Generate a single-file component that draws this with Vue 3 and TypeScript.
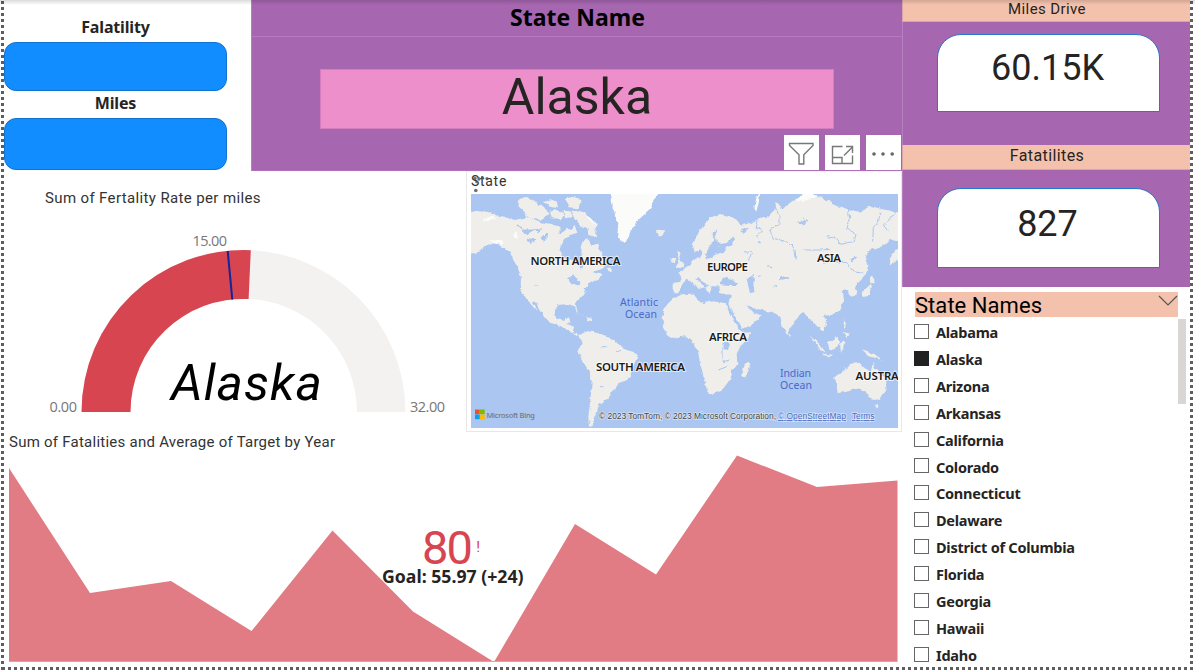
<script setup lang="ts">
interface MapLabel {
  text: string
  x: number
  y: number
  width: number
}

const states: string[] = [
  'Alabama', 'Alaska', 'Arizona', 'Arkansas', 'California', 'Colorado', 'Connecticut',
  'Delaware', 'District of Columbia', 'Florida', 'Georgia', 'Hawaii', 'Idaho',
]
const selected = 'Alaska'

const continents: MapLabel[] = [
  { text: 'NORTH AMERICA', x: 59.5, y: 71.3, width: 90 },
  { text: 'EUROPE', x: 236, y: 76.8, width: 41 },
  { text: 'ASIA', x: 346, y: 67.8, width: 24 },
  { text: 'AFRICA', x: 238, y: 147.3, width: 38 },
  { text: 'SOUTH AMERICA', x: 125, y: 176.8, width: 89 },
  { text: 'AUSTRALIA', x: 384.5, y: 185.8, width: 61 },
]
const oceans: MapLabel[] = [
  { text: 'Atlantic', x: 149, y: 111.5, width: 38 },
  { text: 'Ocean', x: 154, y: 123.7, width: 32 },
  { text: 'Indian', x: 309, y: 182.7, width: 31 },
  { text: 'Ocean', x: 309, y: 194.9, width: 32 },
]

const trend: [number, number][] = [
  [9, 36], [90, 161], [171, 149], [251.5, 199], [332.5, 98.5], [413, 179.5], [494, 230],
  [575, 92], [656, 142.5], [737, 23.5], [817, 55], [897.5, 48.5],
]
const area = `9,229.5 ${trend.map((p) => p.join(',')).join(' ')} 897.5,229.5`
</script>

<template>
  <div class="report">
    <main class="canvas">
      <section class="top">
        <nav class="nav">
          <div class="nav-label">Falatility</div>
          <button class="pill first" aria-label="Falatility"></button>
          <div class="nav-label second">Miles</div>
          <button class="pill last" aria-label="Miles"></button>
        </nav>
        <header class="banner">
          <div class="banner-title"><span>State Name</span></div>
          <div class="state-card"><span>Alaska</span></div>
          <div class="tools">
            <button class="tool" aria-label="Filters">
              <svg width="35" height="35" viewBox="0 0 35 35">
                <path d="M5.5 8.5H29V10.5L19.8 19.8V29H15V19.8L5.5 10.5Z" />
              </svg>
            </button>
            <button class="tool" aria-label="Focus mode">
              <svg width="35" height="35" viewBox="0 0 35 35">
                <path d="M17.500 11.500H7.500V28.500H27.500V20.500M7.500 22.500H17V28.500M19 20.500L27 12.500M21 11.500H27.500V18" />
              </svg>
            </button>
            <button class="tool" aria-label="More options">
              <svg class="dots" width="35" height="35" viewBox="0 0 35 35">
                <circle cx="8" cy="19" r="1.8" /><circle cx="17" cy="19" r="1.8" /><circle cx="26.200" cy="19" r="1.8" />
              </svg>
            </button>
          </div>
        </header>
      </section>

      <section class="middle">
        <svg class="gauge" width="466" height="261" viewBox="0 171 466 261">
          <text class="din title" x="45" y="203" textLength="215.500">Sum of Fertality Rate per miles</text>
          <path class="track" d="M81.500 412A162 162 0 0 1 405.500 412H357A113 113 0 0 0 130.500 412Z" />
          <path class="value" d="M81.500 412A162 162 0 0 1 250.800 250.200L248.600 299A113 113 0 0 0 130.500 412Z" />
          <path class="target" d="M227.700 251L232.300 299.500" />
          <text class="tick" x="192.500" y="246" textLength="34.500">15.00</text>
          <text class="tick" x="49.500" y="412" textLength="27.500">0.00</text>
          <text class="tick" x="410" y="412" textLength="35">32.00</text>
          <text class="din callout" x="171" y="400" textLength="151">Alaska</text>
        </svg>

        <div class="map-card">
          <div class="map-title">
            <span>State</span>
            <svg class="marks" width="24" height="20" viewBox="0 0 24 20">
              <circle cx="4" cy="4.500" r="1.700" /><circle cx="8" cy="5" r="1.700" /><circle cx="11.500" cy="4" r="1.700" />
              <circle cx="16" cy="4.500" r="1.600" /><circle cx="5.500" cy="8" r="1.300" /><circle cx="4.800" cy="16.500" r="1.800" />
            </svg>
          </div>
          <svg class="map" width="427" height="234" viewBox="0 0 427 234">
            <defs>
              <filter id="coast" x="-5%" y="-5%" width="110%" height="110%">
                <feTurbulence type="fractalNoise" baseFrequency="0.16" numOctaves="3" seed="4" />
                <feDisplacementMap in="SourceGraphic" scale="4.500" xChannelSelector="R" yChannelSelector="G" />
              </filter>
            </defs>
            <rect class="sea" width="427" height="234" />
            <g filter="url(#coast)">
              <g transform="scale(.33333) translate(-33 -72)">
                <path class="land" d="M20 128L60 121 100 130 130 140 165 150 200 142 240 157 275 162 300 172 330 180 345 168 352 188 330 195 318 205 303 222 298 245 308 262 325 268 345 272 355 287 362 302 370 280 362 262 368 250 362 235 368 212 385 208 395 225 410 222 420 240 430 265 437 287 425 297 400 305 412 311 428 313 415 330 395 335 385 345 375 355 372 375 360 385 347 400 353 432 340 407 320 402 295 405 285 420 288 445 310 455 325 438 332 455 322 462 342 470 338 487 358 490 350 497 325 482 300 467 270 458 255 442 240 420 225 395 215 395 235 424 220 412 205 390 190 375 182 350 183 320 172 290 160 270 150 247 125 228 100 220 85 225 70 235 45 250 20 250Z" />
                <path class="land" d="M358 492L385 484 410 488 430 498 460 506 475 525 500 540 530 548 532 565 520 585 510 620 495 632 475 640 465 660 450 672 440 687 415 705 412 727 400 745 398 770 387 768 385 740 390 700 395 650 393 610 375 590 360 560 354 540 368 520 362 505Z" />
                <path class="ice" d="M448 60H605L580 95 570 120 545 140 530 155 515 175 500 215 482 214 472 190 475 160 465 130 455 105Z" />
                <path class="land" d="M587 184L600 176 615 180 612 192 596 199ZM178 88L195 80 225 94 234 104 255 110 265 133 242 150 205 145 190 125 175 112ZM250 100L270 88 290 94 295 115 270 110ZM270 125L290 120 310 130 305 148 275 145ZM318 90L342 82 365 88 355 115 325 112ZM310 120L330 120 338 140 315 145ZM335 125L360 120 375 130 390 148 410 165 405 190 410 202 385 195 382 175 360 165 345 150ZM440 295L455 292 455 307 442 303ZM350 430L375 442 365 438ZM380 442L400 448 393 453 378 450Z" />
                <path class="ice" d="M70 150L90 138 110 145 85 154ZM85 210L130 214 127 225 98 219ZM160 187L170 182 173 205 163 204ZM375 135L395 145 414 166 400 162Z" />
                <path class="lake" d="M320 325L340 318 355 327 345 335 360 338 355 345 332 340ZM220 180L245 175 236 188ZM245 205L260 190 257 212ZM300 160L315 180 300 190ZM170 165L190 180 220 180 200 192ZM200 205L225 210 210 220ZM222 345H235M425 530H440M470 542H484M420 650H430" />
              </g>
              <g transform="scale(.33333) translate(627 -72)">
                <path class="land" d="M-22 338L5 336 3 320 -5 305 15 295 30 284 45 270 60 265 70 242 82 265 105 255 130 245 150 225 165 212 160 198 175 192 200 185 205 165 235 145 265 138 282 125 290 93 300 100 305 120 320 108 345 90 375 78 430 84 460 102 500 120 540 125 570 108 620 120 640 123 665 135V218L645 215 625 210 600 235 575 235 555 255 565 285 560 310 535 335 525 350 530 372 516 380 503 358 485 360 490 395 480 420 455 435 435 437 441 465 430 487 410 468 398 452 385 445 370 425 355 445 330 470 322 495 305 470 298 440 270 425 220 415 200 402 210 420 245 438 215 465 187 477 165 440 148 402 155 375 120 370 118 350 95 348 90 372 75 352 55 323 48 327 80 350 55 357 40 335 15 330 2 352 -2 370 -22 370Z" />
                <path class="land" d="M45 250L38 225 50 200 65 175 90 145 120 132 150 138 175 152 185 167 210 158 200 190 160 200 140 215 118 230 95 222 85 250 70 250 60 238Z" />
                <path class="land" d="M40 371L10 372 -20 385 -40 405 -55 440 -48 470 -40 495 -20 508 15 498 30 508 45 525 55 545 60 580 68 610 75 640 85 668 100 671 125 662 145 635 155 605 172 580 170 555 180 530 205 505 212 487 190 488 180 480 165 455 150 425 140 402 105 398 90 392 70 400 50 385Z" />
                <path class="land" d="M-8 242L5 250 0 268 13 282 10 292 -15 294 -3 275ZM-25 265L-13 262 -15 280 -28 281ZM190 585L205 575 210 590 195 625 184 618ZM629 268L645 240 660 235 658 270 633 283ZM545 370L562 352 575 340 568 374 548 378ZM570 325L580 318 584 340 570 338ZM390 500L410 514 435 548 420 540ZM427 551L460 554 450 559 430 556ZM443 517L470 500 478 520 465 540 448 536ZM480 520L497 513 487 538 483 550ZM545 538L570 545 597 562 603 569 570 560ZM487 445L498 460 494 478ZM488 485L510 492 500 504ZM326 490L334 498 330 503Z" />
                <path class="land" d="M463 622L490 602 510 582 540 578 550 590 572 610 578 575 588 600 615 625 617 660 600 690 572 685 560 672 535 655 500 665 470 670ZM585 704L596 706 592 718Z" />
                <path class="ice" d="M220 110L230 82 242 66 234 104 229 125ZM345 90L365 78 370 65 395 68 410 82 375 92Z" />
                <path class="sea" d="M98 190L112 178 105 205 115 222 150 218 115 230 112 242 75 256 88 230 100 215ZM123 330L140 320 150 328 175 338 170 345 145 345 122 343ZM200 325L222 315 220 345 227 365 210 370ZM45 326L60 330 88 348 75 350ZM182 180L205 172 192 193ZM140 403L188 474 180 478ZM132 520L150 518 144 540 132 538Z" />
                <path class="river" d="M285 115L300 135 300 160 270 180 280 205 320 215 345 240 348 265M505 120L510 150 500 175 525 190 520 215 480 223 470 205 440 200M600 125L595 155 580 175 578 215M650 125L610 165 625 185M430 280L450 274 500 278 520 305 550 310M235 145L228 175 245 182 230 200 240 220M190 245L215 248 205 275M355 160L380 150 370 138M128 520L130 575 150 570M115 600L145 588M370 240H425L450 238" />
                <path class="lake" d="M300 325L320 317 326 321 305 328ZM510 268L530 262 515 275ZM360 160L376 152 374 163ZM231 320L242 317M262 292H274M280 350H290" />
              </g>
            </g>
            <text v-for="c in continents" :key="c.text" class="continent" :x="c.x" :y="c.y" :textLength="c.width">{{ c.text }}</text>
            <text v-for="o in oceans" :key="o.text + o.x" class="ocean" :x="o.x" :y="o.y" :textLength="o.width">{{ o.text }}</text>
            <rect x="4" y="215.500" width="4.700" height="4.700" fill="#f25022" />
            <rect x="9" y="215.500" width="4.700" height="4.700" fill="#7fba00" />
            <rect x="4" y="220.500" width="4.700" height="4.700" fill="#00a4ef" />
            <rect x="9" y="220.500" width="4.700" height="4.700" fill="#ffb900" />
            <text class="bing" x="15.500" y="223.500" textLength="48.500">Microsoft Bing</text>
            <text class="legal" x="128" y="225" textLength="177">© 2023 TomTom, © 2023 Microsoft Corporation,</text>
            <text class="legal link" x="307" y="225" textLength="68">© OpenStreetMap</text>
            <text class="legal link" x="381" y="225" textLength="22.500">Terms</text>
          </svg>
        </div>
      </section>

      <svg class="trend" width="902" height="235" viewBox="0 0 902 235">
        <polygon :points="area" />
        <path class="base" d="M9 229.500H897.500" />
        <text class="din title" x="9" y="15" textLength="326">Sum of Fatalities and Average of Target by Year</text>
        <text class="din kpi" x="422" y="132" textLength="51">80</text>
        <text class="din alert" x="476.300" y="120">!</text>
        <text class="goal" x="382" y="151" textLength="141.500" lengthAdjust="spacingAndGlyphs">Goal: 55.97 (+24)</text>
      </svg>
    </main>

    <aside class="side">
      <div class="metrics">
        <div class="metric-title miles"><span>Miles Drive</span></div>
        <div class="metric-card">60.15K</div>
        <div class="metric-title fatal"><span>Fatatilites</span></div>
        <div class="metric-card count">827</div>
      </div>
      <section class="slicer">
        <div class="slicer-title">
          <span>State Names</span>
          <svg width="20" height="12" viewBox="0 0 20 12"><path d="M1 1L10 10L19 1" /></svg>
        </div>
        <div class="slicer-body">
          <ul>
            <li v-for="s in states" :key="s">
              <i :class="{ on: s === selected }"></i><span>{{ s }}</span>
            </li>
          </ul>
          <div class="scroll"></div>
        </div>
      </section>
    </aside>
    <div class="edge left"></div>
    <div class="edge right"></div>
    <div class="edge bottom"></div>
    <div class="shade"></div>
  </div>
</template>

<style>
body { background: #fff; overflow: hidden; }
</style>

<style scoped>
.report {
  position: relative;
  display: grid;
  grid-template-columns: 902px 288px;
  width: 1195px;
  height: 671px;
  overflow: hidden;
  background: #fff;
  font-family: "Noto Sans", "Open Sans", sans-serif;
  color: #252423;
}
button { padding: 0; border: 0; display: block; }
svg { display: block; }
.canvas { display: flex; flex-direction: column; }
.top { display: flex; height: 171px; }
.nav { width: 251px; padding: 19px 0 0 4px; box-sizing: border-box; }
.nav-label {
  width: 223px;
  height: 17px;
  line-height: 17px;
  text-align: center;
  font-size: 16px;
  font-weight: 700;
  letter-spacing: -.15px;
}
.nav-label.second { margin-top: 4px; }
.pill {
  width: 223px;
  height: 49px;
  margin-top: 6px;
  box-sizing: border-box;
  border: 1px solid #1173cf;
  border-radius: 12px;
  background: #118dff;
}
.pill.last { height: 52px; margin-top: 6px; }
.banner { position: relative; width: 651px; background: #a666b0; box-shadow: inset 1px 0 #b67fbf, inset 0 -1px #b070b9; }
.banner-title {
  height: 36px;
  line-height: 34px;
  padding-left: 2px;
  border-bottom: 1px solid #b57bbd;
  text-align: center;
  color: #000;
  font-size: 23px;
  font-weight: 700;
}
.state-card {
  width: 514px;
  height: 60px;
  margin: 32px 0 0 69px;
  box-sizing: border-box;
  border: 1px solid #d67cc0;
  background: #ed8fca;
  text-align: center;
  font: 400 50px/54px Roboto, sans-serif;
}
.tools { position: absolute; right: 1px; bottom: 1px; display: flex; gap: 6px; }
.tool { width: 35px; height: 35px; background: #fff; }
.tool path { fill: none; stroke: #777; stroke-width: 1.4; }
.tool .dots { fill: #666; }
.middle { display: flex; height: 261px; }
.din { font-family: Roboto, sans-serif; }
.title { font-size: 15px; fill: #333; }
.track { fill: #f3f2f1; }
.value { fill: #d64550; }
.target { stroke: #12239e; stroke-width: 2; }
.tick { font-family: "Open Sans", sans-serif; font-size: 14.5px; fill: #777; }
.callout { font-size: 50px; font-style: italic; fill: #000; }
.map-card {
  width: 436px;
  height: 261px;
  padding: 2px 4px 0;
  box-sizing: border-box;
  border: 1px solid #e8e8e8;
  border-top-color: #f4f4f4;
}
.map-title { position: relative; height: 20px; line-height: 14px; font-family: Roboto, sans-serif; font-size: 14px; letter-spacing: .7px; color: #333; }
.marks { position: absolute; left: 0; top: 0; fill: #555; opacity: .85; }
.sea { fill: #abc6f0; }
.land { fill: #efeeea; }
.ice { fill: #fbfbf9; }
.lake { fill: #abc6f0; stroke: #abc6f0; stroke-width: 3; }
.river { fill: none; stroke: #abc6f0; stroke-width: 3; }
.continent { font-size: 11.500px; font-weight: 600; fill: #1b1b1b; paint-order: stroke; stroke: rgba(255, 255, 255, .6); stroke-width: 2px; }
.ocean { font-size: 10.500px; fill: #4a69cc; }
.bing { font-size: 7.500px; font-weight: 500; fill: #777; }
.legal { font-family: "Liberation Sans", Arial, sans-serif; font-size: 8.500px; fill: #444; paint-order: stroke; stroke: rgba(255, 255, 255, .5); stroke-width: 1.500px; }
.link { fill: #4a6ac4; text-decoration: underline; text-decoration-thickness: 1px; }
.trend polygon { fill: #e27c84; }
.base { stroke: #eb9ba2; stroke-width: 1; }
.kpi { font-size: 47px; fill: #d64550; }
.alert { font-size: 15px; fill: #d64550; }
.goal { font-size: 17px; font-weight: 700; fill: #252423; }
.side { display: flex; flex-direction: column; }
.metrics { height: 287px; background: #a666b0; box-shadow: inset 1px 0 #b67fbf; }
.metric-title {
  box-sizing: border-box;
  height: 22px;
  line-height: 18px;
  padding-left: 1px;
  border: 1px solid #dba2ac;
  border-width: 0 0 1px 1px;
  background: #f4c2ac;
  text-align: center;
  font-family: Roboto, sans-serif;
  font-size: 15px;
  letter-spacing: .4px;
}
.metric-title.fatal { height: 25px; margin-top: 33px; line-height: 22px; font-size: 16px; }
.metric-card {
  box-sizing: border-box;
  width: 223px;
  height: 78px;
  margin: 12px 0 0 35px;
  padding-right: 2px;
  border: 1px solid #2678c8;
  border-radius: 24px 24px 0 0;
  background: #fff;
  text-align: center;
  font: 400 36px/66px Roboto, sans-serif;
}
.metric-card.count { height: 80px; margin-top: 18px; line-height: 70px; }
.slicer { padding: 5px 4px 0 12px; }
.slicer-title {
  display: flex;
  justify-content: space-between;
  width: 263px;
  height: 25px;
  margin-left: 1px;
  background: #f4c2ac;
  color: #000;
  font: 400 22px/27px Roboto, sans-serif;
  letter-spacing: .05px;
}
.slicer-title svg { margin-top: 3px; }
.slicer-title path { fill: none; stroke: #555; stroke-width: 1.2; }
.slicer-body { display: flex; justify-content: space-between; height: 348px; overflow: hidden; }
ul { margin: 2px 0 0; padding: 0; list-style: none; }
li { display: flex; align-items: center; gap: 7px; height: 26.9px; font-size: 14.5px; font-weight: 700; letter-spacing: -.25px; }
li i { width: 15px; height: 15px; box-sizing: border-box; border: 1px solid #666; background: #fff; margin-top: -2px; }
li i.on { background: #212121; border-color: #212121; }
li span { position: relative; top: -.3px; }
.scroll { width: 8px; height: 85px; margin: 2px 0 0; background: #d8d7d6; }
.edge { position: absolute; }
.left, .right { top: 1px; bottom: 0; width: 3px; background: repeating-linear-gradient(to bottom, #605e5c 0 3px, #fff 3px 6px); }
.left { left: 1px; }
.right { left: 1190px; }
.bottom { left: 2px; width: 1191px; top: 667px; height: 3px; background: repeating-linear-gradient(to right, #605e5c 0 3px, #fff 3px 6px); }
.shade { position: absolute; inset: 0 0 auto 0; height: 5px; background: linear-gradient(rgba(0, 0, 0, .14), transparent); }
</style>
